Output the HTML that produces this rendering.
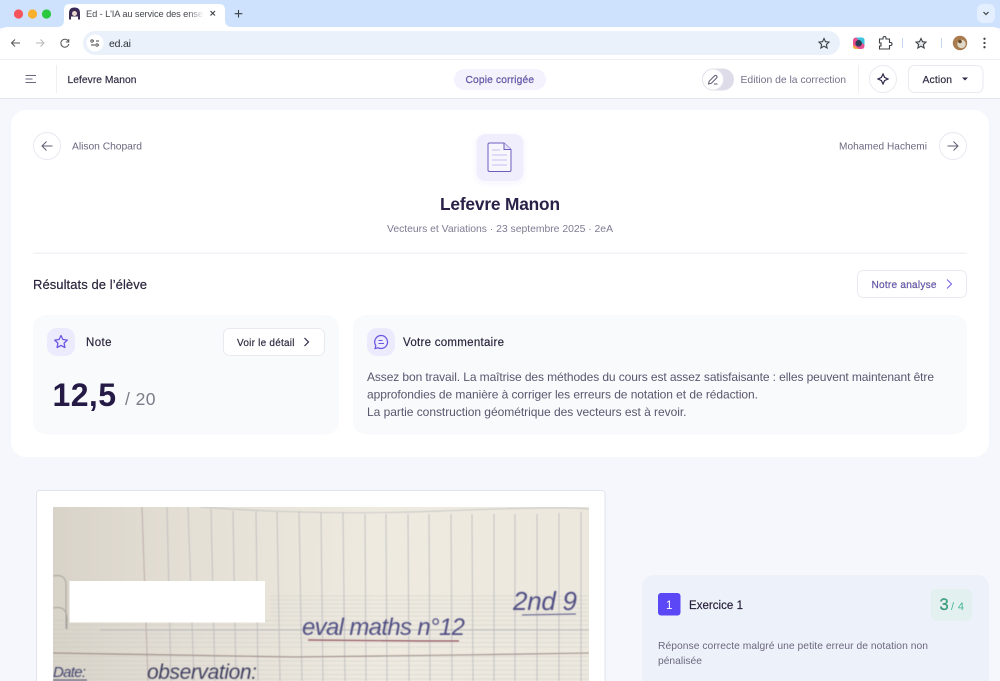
<!DOCTYPE html>
<html lang="fr"><head><meta charset="utf-8"><title>Ed - L'IA au service des enseignants</title>
<style>
html,body{margin:0;padding:0;width:1000px;height:681px;overflow:hidden;background:#f5f7fc}
svg{display:block;filter:blur(.25px)}
text{font-family:"Liberation Sans","DejaVu Sans",sans-serif;white-space:pre}
.m{stroke-width:.14px;stroke:currentColor}
</style></head><body>
<svg width="1000" height="681" viewBox="0 0 1000 681" xmlns="http://www.w3.org/2000/svg">
<defs>
<linearGradient id="pg" x1="0" x2="1" y1="0" y2="0"><stop offset="0" stop-color="#d8d3c8"/><stop offset=".25" stop-color="#e4dfd5"/><stop offset=".6" stop-color="#eeeae0"/><stop offset="1" stop-color="#ece8de"/></linearGradient>
<linearGradient id="fade" x1="0" x2="1" y1="0" y2="0"><stop offset="0" stop-color="#fff" stop-opacity="0"/><stop offset="1" stop-color="#fff"/></linearGradient>
<filter id="b"><feGaussianBlur stdDeviation=".4"/></filter>
<filter id="sh" x="-30%" y="-30%" width="160%" height="160%"><feDropShadow dx="0" dy="2" stdDeviation="3" flood-color="#5b47f5" flood-opacity=".06"/></filter>
<clipPath id="pc"><rect x="53" y="507" width="536" height="174"/></clipPath>
</defs>
<rect width="1000" height="681" fill="#f5f7fc"/>

<!-- browser strip -->
<rect width="1000" height="28" fill="#cfe2fd"/>
<circle cx="18.500" cy="14" r="4.600" fill="#f4545a"/><circle cx="32.500" cy="14" r="4.600" fill="#f8b02e"/><circle cx="46.500" cy="14" r="4.600" fill="#2ac83f"/>
<path d="M57 27q7 0 7-7V10q0-6 6-6h149q6 0 6 6v10q0 7 7 7z" fill="#fff"/>
<path d="M69 19.500v-6.500q0-5.500 5.500-5.500t5.500 5.500v6.500h-2v-3h-7v3z" fill="#3a2a55"/><circle cx="74.500" cy="13.500" r="2.500" fill="#e9d6cf"/>
<text x="86" y="17" font-size="9.300" fill="#43474e" textLength="117" lengthAdjust="spacing">Ed - L'IA au service des ense</text>
<rect x="188" y="6" width="16" height="16" fill="url(#fade)"/>
<path d="M210.500 11l4.500 4.500m0-4.500l-4.500 4.500" stroke="#3c4043" stroke-width="1.100" fill="none"/>
<path d="M238.500 10v7.500m-3.800-3.800h7.600" stroke="#3c4043" stroke-width="1.100" fill="none"/>
<rect x="977" y="4" width="18" height="19" rx="6" fill="#e3eefe"/>
<path d="M983.500 12l2.500 2.500 2.500-2.500" stroke="#3c4043" stroke-width="1.200" fill="none"/>

<!-- toolbar -->
<path d="M0 59V35q0-8 8-8h984q8 0 8 8v24z" fill="#fff"/>
<rect x="83" y="31" width="757" height="24" rx="12" fill="#ebf1fb"/>
<path d="M20 43h-8.500m3.500-3.500l-3.500 3.500 3.500 3.500" stroke="#555" stroke-width="1" fill="none"/>
<path d="M36 43h8m-3.500-3.500l3.500 3.500-3.500 3.500" stroke="#b6b8ba" stroke-width="1" fill="none"/>
<path d="M68.500 41.500a4 4 0 1 0 .3 2.500M68.800 39v3h-3" stroke="#555" stroke-width="1" fill="none"/>
<circle cx="95" cy="43" r="8.500" fill="#fff"/>
<path d="M91 41h3m2 0h3M91 45h4m3 0h1" stroke="#444746" stroke-width="1"/><circle cx="92" cy="41" r="1.200" fill="#fff" stroke="#444746" stroke-width=".8"/><circle cx="97" cy="45" r="1.200" fill="#fff" stroke="#444746" stroke-width=".8"/>
<text x="109" y="47" font-size="10.500" fill="#2e3136" textLength="22">ed.ai</text>
<path d="M824 38.500l1.500 3.200 3.500.4-2.600 2.400.7 3.500-3.100-1.800-3.100 1.800.7-3.500-2.600-2.400 3.500-.4z" fill="none" stroke="#3c4043" stroke-width="1.100"/>
<rect x="853" y="37.500" width="11.500" height="11.500" rx="3" fill="#e8508f"/><path d="M856 37.500h5.500q3 0 3 3v4.500z" fill="#3cc5e0"/><path d="M853 45l6 4h-3q-3 0-3-3z" fill="#f5b13d"/><circle cx="858.700" cy="43.300" r="3.300" fill="#2c3e57"/>
<path d="M879.500 39h3.500v-1a1.500 1.500 0 0 1 3 0v1h3.500v3.500h1a1.500 1.500 0 0 1 0 3h-1V49h-10v-3h1.500v-3h-1.500z" fill="none" stroke="#3c4043" stroke-width="1.100"/>
<path d="M902.500 38v10" stroke="#c5d8ef" stroke-width="1"/><path d="M941.500 38v10" stroke="#c5d8ef" stroke-width="1"/>
<path d="M921 38.500l1.500 3.200 3.500.4-2.600 2.400.7 3.500-3.100-1.800-3.100 1.800.7-3.500-2.600-2.400 3.500-.4z" fill="#e4e6ea" stroke="#3c4043" stroke-width="1.100"/>
<circle cx="960" cy="43" r="7.200" fill="#a87c4f"/><circle cx="961.500" cy="44" r="4.200" fill="#ddd8c8"/><circle cx="960" cy="41.500" r="1.800" fill="#6b4a2c"/>
<circle cx="984.500" cy="38.800" r="1.150" fill="#444746"/><circle cx="984.500" cy="43" r="1.150" fill="#444746"/><circle cx="984.500" cy="47.200" r="1.150" fill="#444746"/>

<!-- app header -->
<rect y="59" width="1000" height="39.500" fill="#fff"/>
<rect y="59" width="1000" height="1" fill="#eceef3"/>
<rect y="98" width="1000" height="1" fill="#e3e4ec"/>
<path d="M25.500 75.500h10.500M25.500 79h7M25.500 82.500h10.500" stroke="#6a667c" stroke-width="1" fill="none"/>
<rect x="56" y="65" width="1" height="28" fill="#eeeff3"/>
<text x="67.500" y="83" font-size="10.300" fill="#3a3153" class="m" textLength="69">Lefevre Manon</text>
<rect x="454" y="69" width="92" height="21" rx="10.500" fill="#f3f2fd"/>
<text x="465.500" y="83" font-size="10.200" fill="#7a67e0" class="m" textLength="68.500">Copie corrigée</text>
<rect x="702" y="68.500" width="32" height="22" rx="11" fill="#dddce8"/>
<circle cx="713" cy="79.500" r="10.500" fill="#fff" stroke="#e3e3ec"/>
<path d="M708.500 84l.7-2.800 5.300-5.300a1.400 1.400 0 0 1 2.100 2.100l-5.300 5.300zM714 84h3.500" fill="none" stroke="#5c5870" stroke-width="1"/>
<text x="740.500" y="83" font-size="10.400" fill="#75718a" textLength="105.500">Edition de la correction</text>
<rect x="858" y="65" width="1" height="28" fill="#eeeff3"/>
<circle cx="883" cy="79" r="13.500" fill="#fff" stroke="#e9e9f0"/>
<path d="M883 74l1.600 3.400 3.400 1.600-3.400 1.600-1.600 3.400-1.600-3.400-3.400-1.600 3.400-1.600z" fill="none" stroke="#2f2648" stroke-width="1.200"/>
<rect x="908.500" y="65.500" width="74.500" height="27" rx="6" fill="#fff" stroke="#e9e9f0"/>
<text x="922.500" y="83" font-size="10.400" fill="#3a3153" class="m" textLength="29.500">Action</text>
<path d="M962 77.500h6l-3 3z" fill="#2f2648"/>

<!-- main card -->
<rect x="11" y="110" width="978" height="347" rx="15" fill="#fff"/>
<circle cx="47" cy="146" r="13.500" fill="#fff" stroke="#e8e8f0"/>
<path d="M52.500 146H42m4.500-4.500L42 146l4.500 4.500" fill="none" stroke="#605c74" stroke-width="1"/>
<text x="72" y="149.500" font-size="10.300" fill="#6c6880" textLength="70">Alison Chopard</text>
<text x="839" y="149.500" font-size="10.100" fill="#6c6880" textLength="88">Mohamed Hachemi</text>
<circle cx="953" cy="146" r="13.500" fill="#fff" stroke="#e8e8f0"/>
<path d="M947.500 146H958m-4.500-4.500L958 146l-4.500 4.500" fill="none" stroke="#605c74" stroke-width="1"/>

<rect x="476.500" y="134" width="47" height="47" rx="9" fill="#f0eefd" filter="url(#sh)"/>
<path d="M489.500 143h14.500l7 6.500V170q0 1.500-1.500 1.500h-20q-1.500 0-1.500-1.500v-25.500q0-1.500 1.500-1.500z" fill="#f7f6fe" stroke="#6d5fc0" stroke-width="1"/>
<path d="M504 143v6.500h7" fill="#e5e1fa" stroke="#6d5fc0" stroke-width="1"/>
<path d="M492 150h8M492 155h15M492 160h15M492 165h15" stroke="#c7c0ee" stroke-width="1.100"/>
<text x="440" y="210" font-size="17.300" font-weight="700" fill="#2a2048" textLength="120">Lefevre Manon</text>
<text x="387" y="232" font-size="10.400" fill="#7f7c92" textLength="226">Vecteurs et Variations · 23 septembre 2025 · 2eA</text>
<rect x="33" y="252.500" width="934" height="1.300" fill="#f0f0f5"/>
<text x="33" y="289" font-size="13" fill="#2f2648" class="m" textLength="114">Résultats de l’élève</text>
<rect x="857.500" y="270.500" width="109" height="27" rx="6" fill="#fff" stroke="#e9e9f0"/>
<text x="871.500" y="288" font-size="10.100" fill="#7a67e0" class="m" textLength="65">Notre analyse</text>
<path d="M947 279.500l4.500 4.500-4.500 4.500" fill="none" stroke="#7a67e0" stroke-width="1.100"/>

<!-- note card -->
<rect x="33" y="315" width="306" height="119.500" rx="13" fill="#f9fafc"/>
<rect x="47" y="328" width="28" height="28" rx="10" fill="#ecebfd"/>
<path d="M61 335.500l1.900 4 4.400.6-3.200 3 .8 4.400-3.900-2.100-3.900 2.100.8-4.400-3.200-3 4.400-.6z" fill="none" stroke="#6a56e0" stroke-width="1.300" stroke-linejoin="round"/>
<text x="86" y="346" font-size="11.500" fill="#2f2648" class="m" textLength="25.500">Note</text>
<rect x="223.500" y="328.500" width="101" height="27" rx="6" fill="#fff" stroke="#e9e9f0"/>
<text x="237" y="346" font-size="10" fill="#3a3153" class="m" textLength="57.500">Voir le détail</text>
<path d="M304.500 338l4 4-4 4" fill="none" stroke="#2f2648" stroke-width="1.200"/>
<text x="52.500" y="406" font-size="32" font-weight="700" fill="#241a45" textLength="63.500">12,5</text>
<text x="125" y="405" font-size="17.500" fill="#7d7a88" textLength="30.500">/ 20</text>

<!-- comment card -->
<rect x="353" y="315" width="614" height="119.500" rx="13" fill="#f9fafc"/>
<rect x="367" y="328" width="28" height="28" rx="10" fill="#ecebfd"/>
<path d="M381 335.500a6.500 6.500 0 1 1-2.900 12.300l-3 .7.700-2.900a6.500 6.500 0 0 1 5.200-10.100z" fill="none" stroke="#6a56e0" stroke-width="1.250"/>
<path d="M378.500 340.500h4M378.500 343.500h5.500" stroke="#6a56e0" stroke-width="1.100"/>
<text x="403" y="346" font-size="11.500" fill="#2f2648" class="m" textLength="101">Votre commentaire</text>
<text x="367" y="381" font-size="12" fill="#5a566e" textLength="567">Assez bon travail. La maîtrise des méthodes du cours est assez satisfaisante : elles peuvent maintenant être</text>
<text x="367" y="398.500" font-size="12" fill="#5a566e" textLength="391">approfondies de manière à corriger les erreurs de notation et de rédaction.</text>
<text x="367" y="416" font-size="12" fill="#5a566e" textLength="319.500">La partie construction géométrique des vecteurs est à revoir.</text>

<!-- paper sheet -->
<rect x="36.500" y="490.500" width="568.500" height="200" rx="3" fill="#fff" stroke="#e2e3ec"/>
<g clip-path="url(#pc)">
<rect x="53" y="507" width="536" height="174" fill="url(#pg)"/>
<g filter="url(#b)">
<g stroke="#c2c1c4" stroke-width=".6" fill="none" opacity=".7">
<path d="M270 596H589M270 600H589M270 604H589M270 608H589M270 612H589M270 616H589M53 620.500H589M53 625H589M53 629.500H589M53 634H589M53 638H589M53 642.500H589M53 647H589M53 656.500H589M53 661H589M53 665.500H589M53 670H589M53 674.500H589M53 679H589"/>
</g>
<g stroke="#b5b4b8" stroke-width=".9" fill="none" opacity=".8">
<path d="M142 507L148 681" stroke="#b09da0"/>
<path d="M167 507L171 681"/><path d="M188 507L194 681"/><path d="M211 509L215 681"/><path d="M233 511L236 681"/><path d="M256 511L258 681"/><path d="M277 511L280 681"/><path d="M299 511L302 681"/>
<path d="M321 512L323 681"/><path d="M343 513L345 681"/><path d="M365 514L366 681"/><path d="M386 514L387 681"/><path d="M408 514L409 681"/><path d="M429 514L430 681"/><path d="M451 514L452 681"/><path d="M472 514L473 681"/><path d="M494 514L494 681"/><path d="M515 514L515 681"/><path d="M537 514L537 681"/><path d="M559 513L559 681"/><path d="M581 512L581 681"/>
<path d="M200 507Q320 516 440 511T589 509" stroke="#bdbcbf"/>
<path d="M100 630H589" stroke="#b0afb2"/>
<path d="M53 653L295 657 460 655 589 653" stroke="#8a7574" stroke-width="1.100"/>
<path d="M53 576q14-3 13 11v42" stroke="#9a9593" stroke-width="1"/>
<path d="M53 608q14-3 14 11v10" stroke="#9a9593" stroke-width="1"/>
</g>
<text x="302" y="635" font-family="Liberation Serif" font-style="italic" font-size="24" fill="#4f4e84" textLength="163" lengthAdjust="spacing">eval maths n°12</text>
<path d="M308 640L420 641 459 641" stroke="#8f4a56" stroke-width="1.200" fill="none"/>
<text x="513" y="610" font-family="Liberation Serif" font-style="italic" font-size="26" fill="#4f4e84" textLength="64">2nd 9</text>
<path d="M522 615L576 614" stroke="#4f4e84" stroke-width="1" fill="none"/>
<text x="53" y="677" font-family="Liberation Serif" font-style="italic" font-size="15" fill="#3c3f6c" textLength="33">Date:</text>
<path d="M53 680h34" stroke="#3c3f6c" stroke-width="1"/>
<text x="147" y="679" font-family="Liberation Serif" font-style="italic" font-size="21" fill="#3c3d60" textLength="110">observation:</text>
</g>
<rect x="69.500" y="581" width="195.500" height="41.500" fill="#fff"/>
</g>

<!-- exercise panel -->
<rect x="642" y="575" width="347" height="130" rx="12" fill="#edf1f9"/>
<rect x="658" y="593" width="22.500" height="22.500" rx="3" fill="#5b47f5"/>
<text x="669.200" y="609" font-size="11.500" fill="#fff" text-anchor="middle">1</text>
<text x="689" y="609" font-size="11.500" fill="#2a2048" class="m" textLength="54">Exercice 1</text>
<rect x="931" y="589" width="41" height="31.500" rx="6" fill="#e3f0f0"/>
<text x="939.500" y="610" font-size="16.500" fill="#35b98a" class="m" textLength="9">3</text>
<text x="951" y="610" font-size="11" fill="#48b795" textLength="13">/ 4</text>
<text x="658" y="649" font-size="10.300" fill="#6c6880" textLength="270">Réponse correcte malgré une petite erreur de notation non</text>
<text x="658" y="664" font-size="10.300" fill="#6c6880" textLength="44">pénalisée</text>
</svg>
</body></html>
